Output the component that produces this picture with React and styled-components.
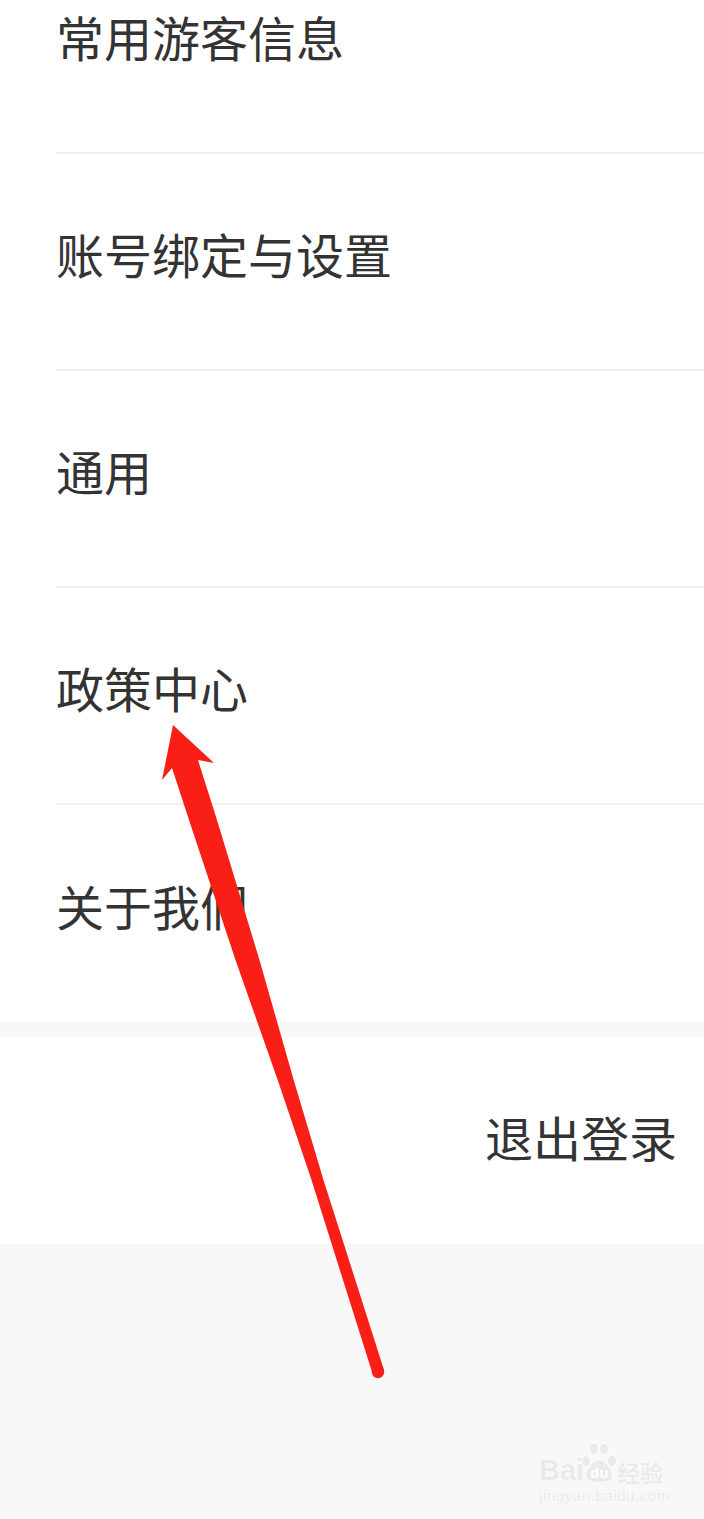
import React from "react";
import styled, { createGlobalStyle } from "styled-components";

const GlobalStyle = createGlobalStyle`
  html, body {
    margin: 0;
    padding: 0;
    background: #f8f8f8;
  }
  body {
    font-family: "Noto Sans CJK SC", "Noto Sans", sans-serif;
    color: #333333;
    overflow: hidden;
  }
`;

const Page = styled.div`
  position: relative;
  width: 704px;
  height: 1519px;
  overflow: hidden;
  background: #f8f8f8;
`;

const Scroll = styled.div`
  margin-top: -63px;
  display: flex;
  flex-direction: column;
  gap: 15px;
`;

const Section = styled.div`
  background: #ffffff;
`;

const MenuList = styled.ul`
  list-style: none;
  margin: 0 0 0 56px;
  padding: 0;
`;

const MenuRow = styled.li`
  height: 217px;
  display: flex;
  align-items: center;
  padding-bottom: 18px;
  box-sizing: border-box;
  border-bottom: 2px solid #efefef;
  font-size: 48px;
  line-height: 1;
  color: #333333;
  &:last-child {
    border-bottom: none;
  }
`;

const LogoutRow = styled.div`
  height: 207px;
  box-sizing: border-box;
  display: flex;
  align-items: center;
  justify-content: flex-end;
  padding: 0 27px 10px 0;
  font-size: 48px;
  line-height: 1;
  color: #333333;
`;

const Overlay = styled.svg`
  position: absolute;
  left: 0;
  top: 0;
  pointer-events: none;
`;

const Watermark = styled.div`
  position: absolute;
  left: 539px;
  top: 1442px;
  display: flex;
  flex-direction: column;
  align-items: flex-start;
  color: #eaeaea;
  text-shadow: 0 0 2px #ffffff, 0 0 1px #ffffff;
  pointer-events: none;
`;

const MarkTop = styled.div`
  display: flex;
  align-items: flex-end;
  height: 42px;
  line-height: 1;
`;

const MarkLatin = styled.span`
  font-family: "Liberation Sans", Arial, sans-serif;
  font-weight: bold;
  font-size: 29px;
  margin-bottom: -1px;
`;

const Paw = styled.span`
  position: relative;
  display: inline-flex;
  align-items: flex-end;
  justify-content: center;
  width: 38px;
  height: 42px;
  margin-left: -4px;
`;

const PawText = styled.span`
  position: relative;
  font-family: "Liberation Sans", Arial, sans-serif;
  font-weight: bold;
  font-size: 15px;
  color: #ffffff;
  text-shadow: none;
  margin-bottom: 4px;
`;

const MarkCn = styled.span`
  font-family: "Noto Sans CJK SC", sans-serif;
  font-weight: bold;
  font-size: 23px;
  margin-left: -1px;
  margin-bottom: 0px;
`;

const MarkUrl = styled.div`
  font-family: "Liberation Sans", Arial, sans-serif;
  font-size: 15px;
  margin-top: 3px;
  letter-spacing: 0.6px;
`;

const items = ["常用游客信息", "账号绑定与设置", "通用", "政策中心", "关于我们"];

export default function App() {
  return (
    <Page>
      <GlobalStyle />
      <Scroll>
        <Section>
          <MenuList>
            {items.map((t) => (
              <MenuRow key={t}>{t}</MenuRow>
            ))}
          </MenuList>
        </Section>
        <Section>
          <LogoutRow>退出登录</LogoutRow>
        </Section>
      </Scroll>

      <Watermark>
        <MarkTop>
          <MarkLatin>Bai</MarkLatin>
          <Paw>
            <svg
              width="38"
              height="42"
              viewBox="0 0 38 42"
              style={{ position: "absolute", left: 0, top: 0 }}
            >
              <g fill="#eaeaea" stroke="#ffffff" strokeWidth="1">
                <ellipse cx="6" cy="19" rx="4.5" ry="5.5" />
                <ellipse cx="14" cy="7" rx="4.5" ry="6" />
                <ellipse cx="24" cy="7" rx="4.5" ry="6" />
                <ellipse cx="32" cy="19" rx="4.5" ry="5.5" />
                <path d="M19 18 C 11 18, 4 30, 6 36 C 8 42, 30 42, 32 36 C 34 30, 27 18, 19 18 Z" />
              </g>
            </svg>
            <PawText>du</PawText>
          </Paw>
          <MarkCn>经验</MarkCn>
        </MarkTop>
        <MarkUrl>jingyan.baidu.com</MarkUrl>
      </Watermark>

      <Overlay width="704" height="1519" viewBox="0 0 704 1519">
        <path
          fill="#f91f16"
          d="M173 725 L214 763 L198 760 L217 820 L259.5 960 L293.7 1080 L323.5 1180 L384 1370 L372 1372 L311.5 1180 L277.7 1080 L235.5 960 L189 820 L172 768 L162 780 Z"
        />
        <circle cx="378" cy="1372" r="6.2" fill="#f91f16" />
      </Overlay>
    </Page>
  );
}
